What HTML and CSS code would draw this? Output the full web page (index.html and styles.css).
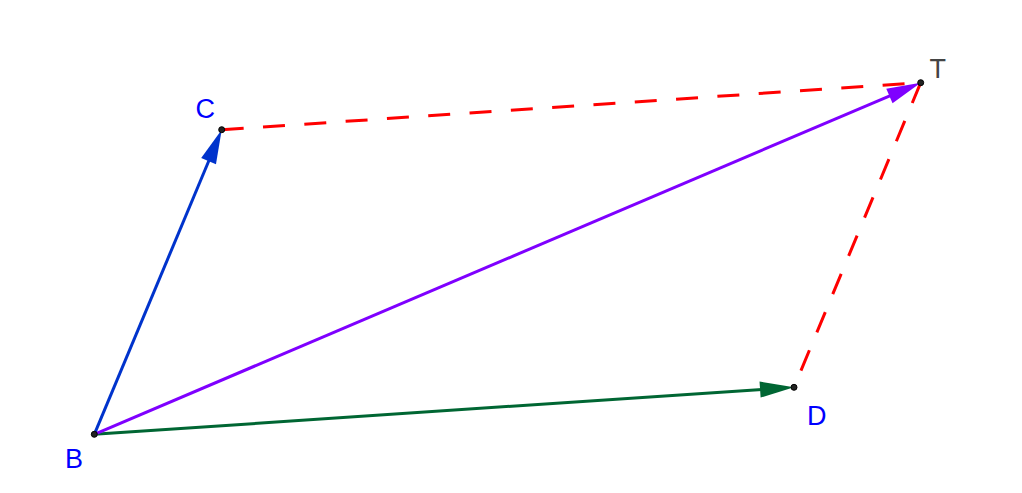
FILE: index.html
```html
<!DOCTYPE html>
<html>
<head>
<meta charset="utf-8">
<link rel="stylesheet" href="styles.css">
</head>
<body>
<svg class="canvas" width="1022" height="493" viewBox="0 0 1022 493" xmlns="http://www.w3.org/2000/svg">
  <!-- dashed red segments -->
  <line class="dash" x1="221.7" y1="129.7" x2="920.7" y2="82.7"/>
  <line class="dash" x1="920.7" y1="82.7" x2="794" y2="387.3"/>
  <!-- vectors -->
  <line class="vec vec-blue" x1="94.3" y1="434.3" x2="210" y2="158"/>
  <polygon class="head-blue" points="221.7,129.7 215.96,164.16 201.2,157.98"/>
  <line class="vec vec-green" x1="94.3" y1="434.3" x2="762" y2="389.4"/>
  <polygon class="head-green" points="794,387.3 760.62,397.56 759.54,381.6"/>
  <line class="vec vec-purple" x1="94.3" y1="434.3" x2="891" y2="95.3"/>
  <polygon class="head-purple" points="920.7,82.7 892.54,103.37 886.28,88.65"/>
  <!-- points -->
  <circle class="pt" cx="94.3" cy="434.3" r="3"/>
  <circle class="pt" cx="221.7" cy="129.7" r="3"/>
  <circle class="pt" cx="920.7" cy="82.7" r="3"/>
  <circle class="pt" cx="794" cy="387.3" r="3"/>
  <!-- labels -->
  <text class="lbl lbl-blue" x="195.5" y="118">C</text>
  <text class="lbl lbl-gray" x="929.5" y="77.5">T</text>
  <text class="lbl lbl-blue" x="65" y="467.5">B</text>
  <text class="lbl lbl-blue" x="807" y="425">D</text>
</svg>
</body>
</html>
```
FILE: styles.css
```css
html, body {
  margin: 0;
  padding: 0;
  background: #ffffff;
}
.canvas {
  display: block;
}
.dash {
  stroke: #ff0000;
  stroke-width: 3;
  stroke-dasharray: 22 19.4;
  fill: none;
}
.vec {
  stroke-width: 3;
  fill: none;
}
.vec-blue { stroke: #0033cc; }
.vec-green { stroke: #006633; }
.vec-purple { stroke: #7f00ff; }
.head-blue { fill: #0033cc; }
.head-green { fill: #006633; }
.head-purple { fill: #7f00ff; }
.pt {
  fill: #222222;
  stroke: #000000;
  stroke-width: 1;
}
.lbl {
  font-family: "Liberation Sans", Arial, sans-serif;
  font-size: 27px;
}
.lbl-blue { fill: #0000ff; }
.lbl-gray { fill: #444444; }
```
